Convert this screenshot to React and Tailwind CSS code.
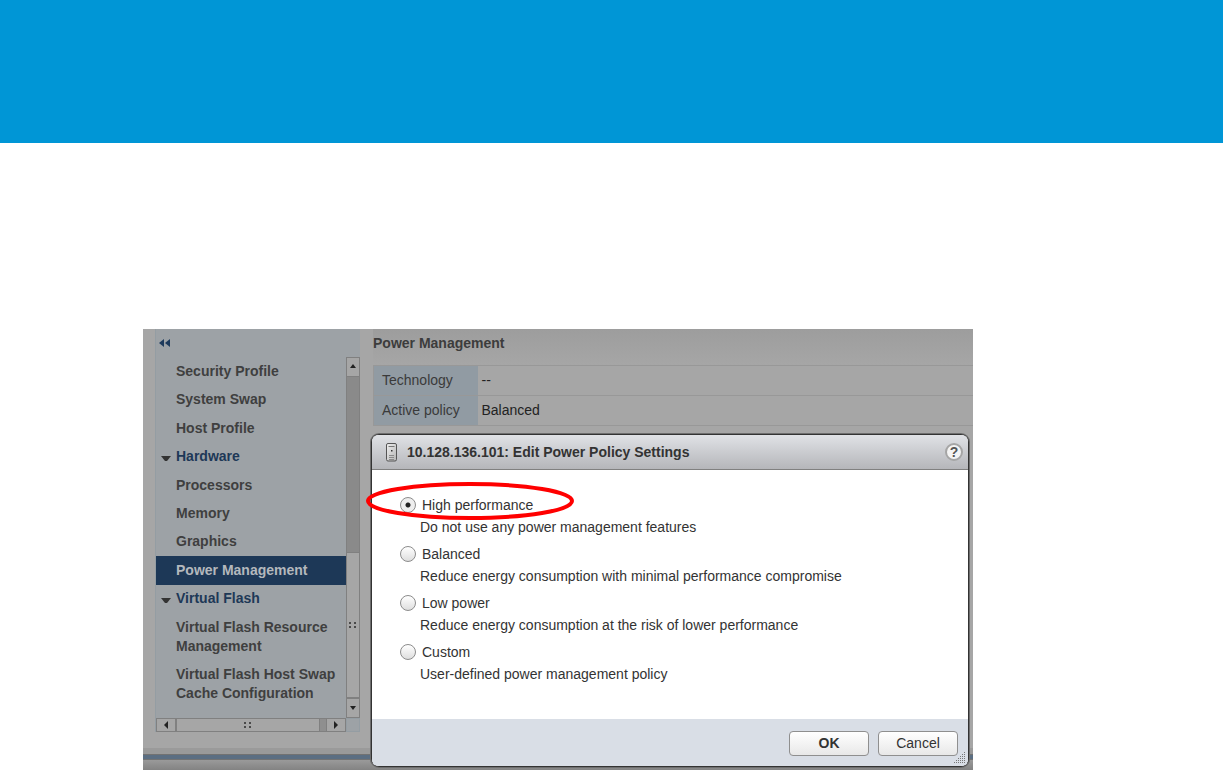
import { useState } from "react";

const navItems = [
    { label: "Security Profile" },
    { label: "System Swap" },
    { label: "Host Profile" },
    { label: "Hardware", group: true },
    { label: "Processors" },
    { label: "Memory" },
    { label: "Graphics" },
    { label: "Power Management" },
    { label: "Virtual Flash", group: true },
    { label: "Virtual Flash Resource Management" },
    { label: "Virtual Flash Host Swap Cache Configuration" },
];

const policies = [
    {
        id: "high",
        label: "High performance",
        description: "Do not use any power management features",
    },
    {
        id: "balanced",
        label: "Balanced",
        description: "Reduce energy consumption with minimal performance compromise",
    },
    {
        id: "low",
        label: "Low power",
        description: "Reduce energy consumption at the risk of lower performance",
    },
    {
        id: "custom",
        label: "Custom",
        description: "User-defined power management policy",
    },
];

const arrows = {
    up: "M4 1 L7 5 H1 Z",
    down: "M1 2 H7 L4 6 Z",
    left: "M6 0 V8 L2 4 Z",
    right: "M2 0 V8 L6 4 Z",
};

const ScrollArrow = ({ direction, className }) => (
    <button
        type="button"
        aria-label={`Scroll ${direction}`}
        className={`flex shrink-0 items-center justify-center border border-[#808080] bg-[#a6a6a6] ${className}`}
    >
        <svg width="8" height="8" viewBox="0 0 8 8" fill="#222">
            <path d={arrows[direction]} />
        </svg>
    </button>
);

const Grip = () => (
    <svg width="8" height="6" viewBox="0 0 8 6" fill="#4a4a4a">
        <rect x="0" y="0" width="2" height="2" />
        <rect x="5" y="0" width="2" height="2" />
        <rect x="0" y="4" width="2" height="2" />
        <rect x="5" y="4" width="2" height="2" />
    </svg>
);

const Sidebar = () => {
    const [active, setActive] = useState("Power Management");

    return (
        <aside className="ml-3 w-[205px] shrink-0 border-l border-[#949da3] bg-[#9da2a6]">
            <button type="button" aria-label="Collapse" className="flex h-7 items-center pl-[3px]">
                <svg width="11" height="8" viewBox="0 0 11 8" fill="#1d3a5c">
                    <path d="M5 0 V8 L0 4 Z M11 0 V8 L6 4 Z" />
                </svg>
            </button>
            <div className="flex">
                <ul className="flex h-[361px] min-w-0 flex-1 flex-col pb-[10px] text-[14px] leading-[19px] font-bold text-[#3f3f3f]">
                    {navItems.map((item) => (
                        <li
                            key={item.label}
                            className={`flex flex-auto items-center ${
                                active === item.label ? "bg-[#1d3857] text-[#b4b8bd]" : ""
                            } ${item.group ? "text-[#1d3857]" : ""}`}
                        >
                            <span className="flex w-5 shrink-0 justify-center pt-1">
                                {item.group && (
                                    <svg width="10" height="6" viewBox="0 0 10 6" fill="#333">
                                        <path d="M0 0 H10 L6 5 H4 Z" />
                                    </svg>
                                )}
                            </span>
                            <a
                                href="#"
                                className="py-1"
                                onClick={(e) => {
                                    e.preventDefault();
                                    if (!item.group) setActive(item.label);
                                }}
                            >
                                {item.label}
                            </a>
                        </li>
                    ))}
                </ul>
                <div className="flex w-[14px] flex-col bg-[#8a8a8a]">
                    <ScrollArrow direction="up" className="h-5 w-full" />
                    <div className="flex-1 border-x border-[#808080]" />
                    <div className="flex h-[146px] items-center justify-center border border-[#808080] bg-[#a6a6a6]">
                        <Grip />
                    </div>
                    <ScrollArrow direction="down" className="h-5 w-full" />
                </div>
            </div>
            <div className="flex h-[14px]">
                <ScrollArrow direction="left" className="h-full w-5" />
                <div className="flex flex-1 items-center justify-center border border-[#808080] bg-[#a6a6a6]">
                    <Grip />
                </div>
                <div className="w-[6px] border-y border-[#808080] bg-[#8f8f8f]" />
                <ScrollArrow direction="right" className="h-full w-5" />
                <div className="w-[14px] border border-[#949da3]" />
            </div>
        </aside>
    );
};

const PolicyTable = () => (
    <section className="ml-[13px] min-w-0 flex-1">
        <h2 className="h-9 bg-linear-to-b from-[#9d9d9d] to-[#a6a6a6] text-[14px] leading-7 font-bold text-[#3c3c3c]">
            Power Management
        </h2>
        <table className="w-full border-collapse text-[14px]">
            <tbody>
                <tr className="h-[30px] border-y border-[#989898]">
                    <th className="w-[104px] border-l border-[#989898] bg-[#919ba3] pl-2 text-left font-normal text-[#3a3a3a]">
                        Technology
                    </th>
                    <td className="pl-1 text-[#222]">--</td>
                </tr>
                <tr className="h-[30px] border-y border-[#989898]">
                    <th className="border-l border-[#989898] bg-[#919ba3] pl-2 text-left font-normal text-[#3a3a3a]">
                        Active policy
                    </th>
                    <td className="pl-1 text-[#222]">Balanced</td>
                </tr>
            </tbody>
        </table>
    </section>
);

const HostIcon = () => (
    <svg width="11" height="19" viewBox="0 0 11 19" fill="none">
        <defs>
            <linearGradient id="host-case" x1="0" y1="0" x2="1" y2="1">
                <stop offset="0" stopColor="#f0f0f0" />
                <stop offset="1" stopColor="#b4b4b4" />
            </linearGradient>
        </defs>
        <rect x="0.5" y="0.5" width="10" height="17.5" rx="1.5" fill="url(#host-case)" stroke="#555" />
        <path d="M2.5 3.5 H8.5" stroke="#777" />
        <rect x="5" y="7" width="1.5" height="1.5" fill="#333" />
        <path d="M3 12.5 H8 M3 14.5 H8 M3 16.5 H8" stroke="#8a8a8a" />
    </svg>
);

const PowerPolicyDialog = () => {
    const [policy, setPolicy] = useState("high");

    return (
        <div
            role="dialog"
            aria-labelledby="dialog-title"
            className="absolute top-[105px] right-1 left-[228px] rounded-lg border border-[#333] bg-white text-[14px] text-[#333] ring-1 ring-[#6e6e6e]"
        >
            <header className="flex h-[35px] items-center rounded-t-md border-b border-[#808080] bg-linear-to-b from-[#e0e2e6] to-[#b5b6ba] pr-[5px] pl-[14px]">
                <HostIcon />
                <h1 id="dialog-title" className="flex-1 pl-[10px] font-bold">
                    10.128.136.101: Edit Power Policy Settings
                </h1>
                <button
                    type="button"
                    aria-label="Help"
                    className="flex size-[18px] items-center justify-center rounded-full border-2 border-[#a5a5a5] bg-[#f4f4f4] text-[14px] font-bold text-[#555]"
                >
                    ?
                </button>
            </header>

            <form onSubmit={(e) => e.preventDefault()}>
                <div className="relative flex flex-col gap-[5px] px-7 pt-6 pb-[34px] leading-[22px]">
                    {policies.map((item) => (
                        <div key={item.id}>
                            <div className="flex items-center">
                                <input
                                    type="radio"
                                    name="policy"
                                    id={item.id}
                                    checked={policy === item.id}
                                    onChange={() => setPolicy(item.id)}
                                    aria-describedby={`${item.id}-description`}
                                    className="size-4 appearance-none rounded-full border border-[#8c8c8c] bg-linear-to-b from-white to-[#dedede] checked:bg-[radial-gradient(circle,#222_2px,#eeeeee_3px)]"
                                />
                                <label htmlFor={item.id} className="pl-[6px]">
                                    {item.label}
                                </label>
                            </div>
                            <p id={`${item.id}-description`} className="pl-5">
                                {item.description}
                            </p>
                        </div>
                    ))}
                    <svg
                        className="pointer-events-none absolute top-[10px] left-[-8px]"
                        width="212"
                        height="42"
                        viewBox="0 0 212 42"
                        fill="none"
                    >
                        <ellipse cx="106" cy="21" rx="102" ry="17" stroke="#ff0000" strokeWidth="4" />
                    </svg>
                </div>
                <footer className="relative flex h-[47px] items-center justify-end gap-[9px] rounded-b-md bg-[#d9dee6] pt-[2px] pr-[10px]">
                    <button
                        type="submit"
                        className="h-[25px] w-20 rounded border border-[#8f8f8f] bg-linear-to-b from-white to-[#e8e8e8] font-bold"
                    >
                        OK
                    </button>
                    <button
                        type="button"
                        className="h-[25px] w-20 rounded border border-[#8f8f8f] bg-linear-to-b from-white to-[#e8e8e8]"
                    >
                        Cancel
                    </button>
                    <svg
                        className="absolute right-[3px] bottom-[3px]"
                        width="11"
                        height="11"
                        viewBox="0 0 11 11"
                        stroke="#777"
                        strokeDasharray="1 1"
                    >
                        <path d="M0 10.5 H11 M2 8.5 H11 M4 6.5 H11 M6 4.5 H11 M8 2.5 H11 M10 0.5 H11" />
                    </svg>
                </footer>
            </form>
        </div>
    );
};

const App = () => {
    return (
        <div className="min-h-screen bg-white font-['Liberation_Sans',Arial,sans-serif]">
            <div className="h-[143px] bg-[#0096d6]" />
            <main className="pt-[186px] pr-[250px] pl-[143px]">
                <div className="relative bg-[#a6a6a6]">
                    <div className="flex pb-4">
                        <Sidebar />
                        <PolicyTable />
                    </div>
                    <div className="h-[6px] bg-[#9a9a9a]" />
                    <div className="h-[6px] border-y border-[#727272] bg-[#5b6e82]" />
                    <div className="h-[10px] bg-linear-to-b from-[#9a9a9a] to-[#838383]" />
                    <PowerPolicyDialog />
                </div>
            </main>
        </div>
    );
};

export default App;
